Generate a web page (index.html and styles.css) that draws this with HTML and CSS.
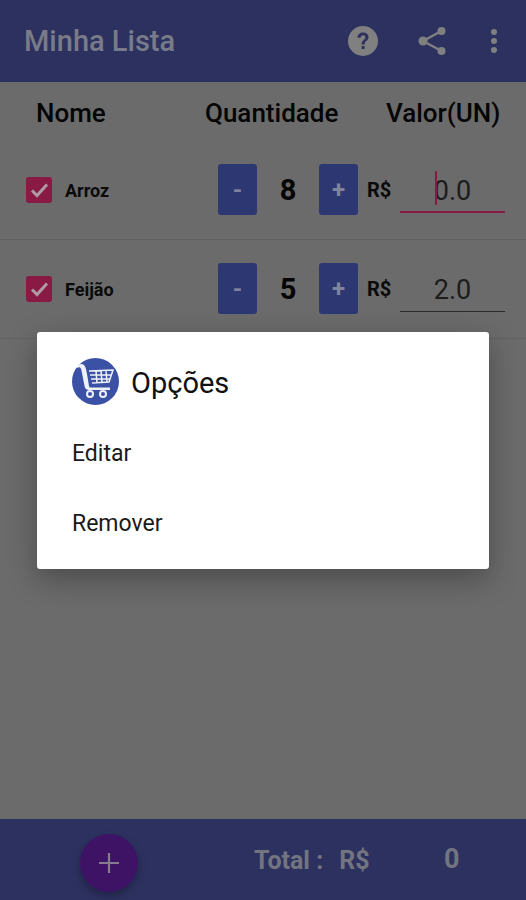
FILE: index.html

```html
<!DOCTYPE html>
<html lang="en">
<head>
    <meta charset="UTF-8">
    <meta name="viewport" content="width=device-width, initial-scale=1.0">
    <title>Minha Lista</title>
    <link rel="stylesheet" href="styles.css">
</head>
<body>
    <div class="app">
        <!-- App bar -->
        <div class="appbar">
            <span class="appbar-title">Minha Lista</span>
            <svg class="icon-help" width="30" height="30" viewBox="0 0 30 30">
                <circle cx="15" cy="15" r="15" fill="#808080"/>
                <path d="M9.500 11.800c0-3.200 2.400-5.200 5.600-5.200 3.100 0 5.400 1.900 5.400 4.600 0 3.500-3.900 3.700-3.900 7.200h-3c0-4.500 3.800-4.600 3.800-7.100 0-1.200-.9-2.100-2.300-2.100-1.400 0-2.500 1-2.500 2.600z" fill="#2c315f"/>
                <rect x="13.600" y="20" width="3" height="3" fill="#2c315f"/>
            </svg>
            <svg class="icon-share" width="30" height="32" viewBox="0 0 30 32">
                <g fill="#808080">
                    <circle cx="24.500" cy="6" r="4"/>
                    <circle cx="6" cy="16" r="4.500"/>
                    <circle cx="24.500" cy="26" r="4"/>
                </g>
                <path d="M24.500 6 6 16l18.500 10" fill="none" stroke="#808080" stroke-width="2.400"/>
            </svg>
            <div class="icon-more">
                <i></i><i></i><i></i>
            </div>
        </div>

        <!-- Column titles -->
        <div class="list-head">
            <span>Nome</span>
            <span>Quantidade</span>
            <span>Valor(UN)</span>
        </div>

        <!-- Items -->
        <div class="list">
            <div class="item">
                <span class="check">
                    <svg width="19" height="16" viewBox="0 0 19 16"><path d="M2 8.500l5 5L17 2.500" fill="none" stroke="#ad9aa2" stroke-width="3"/></svg>
                </span>
                <span class="item-name">Arroz</span>
                <span class="step">-</span>
                <span class="qty">8</span>
                <span class="step">+</span>
                <span class="currency">R$</span>
                <span class="price price-focus"><span class="caret"></span>0.0</span>
            </div>
            <div class="item">
                <span class="check">
                    <svg width="19" height="16" viewBox="0 0 19 16"><path d="M2 8.500l5 5L17 2.500" fill="none" stroke="#ad9aa2" stroke-width="3"/></svg>
                </span>
                <span class="item-name">Feijão</span>
                <span class="step">-</span>
                <span class="qty">5</span>
                <span class="step">+</span>
                <span class="currency">R$</span>
                <span class="price">2.0</span>
            </div>
        </div>

        <!-- Footer -->
        <div class="footer">
            <span class="fab">
                <svg width="22" height="22" viewBox="0 0 22 22"><path d="M11 1v20M1 11h20" stroke="#857c8a" stroke-width="2.200"/></svg>
            </span>
            <span class="total-label">Total :<span class="total-currency">R$</span></span>
            <span class="total-value">0</span>
        </div>

        <!-- Options dialog -->
        <div class="dialog">
            <div class="dialog-head">
                <svg class="cart" width="47" height="47" viewBox="0 0 47 47">
                    <circle cx="23.500" cy="23.500" r="23.500" fill="#3a51a5"/>
                    <path d="M5 9c1-3 5-4 7-2 2 2 2 5 3 9l2 12c.2 1 .8 1.500 2 1.500h19v2.500H17c-2.500 0-4-1.500-4.500-4L10 15c-.5-3-1-5-2-5.500-1-.4-2 0-3 .5z" fill="#eef1f8"/>
                    <path d="M17 13l24-1-4 12-17 1M18 17h21M19 21h19M24 13l1 12M29 12.500l1 12M34 12.500l1 12" fill="none" stroke="#eef1f8" stroke-width="1.500"/>
                    <circle cx="18" cy="36" r="3" fill="none" stroke="#eef1f8" stroke-width="2"/>
                    <circle cx="31" cy="36" r="3" fill="none" stroke="#eef1f8" stroke-width="2"/>
                </svg>
                <span class="dialog-title">Opções</span>
            </div>
            <div class="dialog-option">Editar</div>
            <div class="dialog-option">Remover</div>
        </div>
    </div>
</body>
</html>
```

FILE: styles.css

```css
/* General Styles */
html, body {
    margin: 0;
    padding: 0;
}

body {
    font-family: Roboto, 'Liberation Sans', sans-serif;
    background-color: #6b6b6b;
}

.app {
    position: relative;
    width: 526px;
    height: 900px;
    display: flex;
    flex-direction: column;
    overflow: hidden;
    background-color: #6b6b6b;
}

/* App bar */
.appbar {
    height: 82px;
    flex-shrink: 0;
    display: flex;
    align-items: center;
    background-color: #2c315f;
}

.appbar-title {
    margin-left: 24px;
    font-size: 29px;
    font-weight: 500;
    flex: 1;
    color: #797c88;
}

.icon-help {
    margin-right: 39px;
}

.icon-share {
    margin-right: 44px;
}

.icon-more {
    display: flex;
    flex-direction: column;
    gap: 3px;
    margin-right: 29px;
}

.icon-more i {
    width: 6px;
    height: 6px;
    border-radius: 50%;
    background-color: #808080;
}

/* Column titles */
.list-head {
    height: 59px;
    display: flex;
    align-items: center;
    padding-top: 3px;
    box-sizing: border-box;
    font-size: 26px;
    font-weight: 500;
    color: #050505;
}

.list-head span:nth-child(1) {
    margin-left: 36px;
    width: 169px;
}

.list-head span:nth-child(2) {
    width: 181px;
}

/* Items */
.item {
    height: 99px;
    display: flex;
    align-items: center;
    border-bottom: 1px solid #626262;
    box-sizing: border-box;
    padding-bottom: 1px;
    padding-left: 26px;
}

.check {
    width: 26px;
    height: 26px;
    flex-shrink: 0;
    display: flex;
    align-items: center;
    justify-content: center;
    border-radius: 3px;
    background-color: #881a44;
}

.item-name {
    width: 153px;
    margin-left: 13px;
    padding-top: 2px;
    font-size: 18px;
    font-weight: 700;
    color: #0a0a0a;
}

.step {
    width: 39px;
    height: 51px;
    display: flex;
    align-items: center;
    justify-content: center;
    border-radius: 3px;
    background-color: #2d3772;
    color: #7f849c;
    font-size: 24px;
    font-weight: 700;
}

.qty {
    width: 62px;
    text-align: center;
    font-size: 29px;
    font-weight: 700;
    color: #050505;
}

.currency {
    width: 33px;
    margin-left: 9px;
    font-size: 20px;
    font-weight: 700;
    color: #0a0a0a;
}

.price {
    position: relative;
    width: 105px;
    height: 47px;
    display: flex;
    align-items: center;
    justify-content: center;
    padding-top: 4px;
    box-sizing: border-box;
    border-bottom: 1px solid #2b2b2b;
    font-size: 27px;
    color: #1c1c1c;
}

.price-focus {
    border-bottom: 2px solid #881a44;
}

.caret {
    position: absolute;
    left: 35px;
    top: 5px;
    width: 2px;
    height: 34px;
    background-color: #881a44;
}

/* Footer */
.footer {
    position: absolute;
    left: 0;
    right: 0;
    bottom: 0;
    height: 81px;
    display: flex;
    align-items: center;
    background-color: #2c315f;
    color: #72757f;
    font-weight: 700;
}

.fab {
    width: 58px;
    height: 58px;
    margin-left: 80px;
    margin-top: 6px;
    flex-shrink: 0;
    display: flex;
    align-items: center;
    justify-content: center;
    border-radius: 50%;
    background-color: #3e1366;
    box-shadow: 0 4px 8px rgba(0, 0, 0, 0.25);
}

.total-label {
    margin-left: 116px;
    font-size: 25px;
    width: 190px;
    padding-top: 2px;
}

.total-currency {
    margin-left: 16px;
}

.total-value {
    font-size: 27px;
    margin-top: -2px;
}

/* Options dialog */
.dialog {
    position: absolute;
    left: 37px;
    top: 332px;
    width: 452px;
    height: 237px;
    box-sizing: border-box;
    padding: 26px 0 0 35px;
    border-radius: 3px;
    background-color: #ffffff;
    box-shadow: 0 10px 30px rgba(0, 0, 0, 0.3);
}

.dialog-head {
    display: flex;
    align-items: center;
    height: 47px;
}

.dialog-title {
    margin-left: 12px;
    padding-top: 3px;
    font-size: 29px;
    color: #111111;
}

.dialog-option {
    height: 70px;
    display: flex;
    align-items: center;
    font-size: 23px;
    color: #1a1a1a;
}

.dialog-head + .dialog-option {
    margin-top: 13px;
}
```
